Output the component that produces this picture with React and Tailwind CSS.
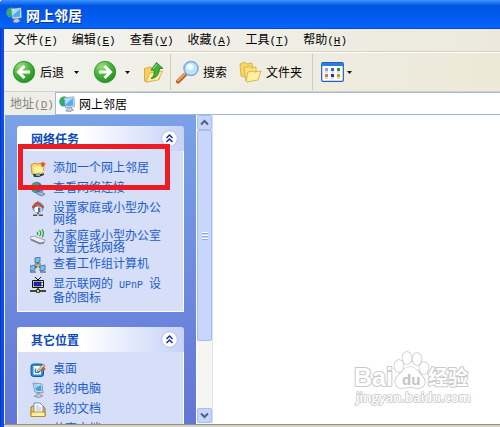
import React from "react";

const Key = ({ children }) => (
  <span className="font-['Liberation_Mono',monospace] text-[11px]">
    (<u className="underline-offset-1">{children}</u>)
  </span>
);

const NetworkIcon = ({ className }) => (
  <svg viewBox="0 0 16 16" className={className} aria-hidden="true">
    <circle cx="5.2" cy="5.6" r="5" fill="#3d8fd6" />
    <path d="M1 3.5C2.5 1 5 .4 7 1L6 4 4.5 5.500 5 8 3 9.500 1 7z" fill="#35b04a" />
    <path d="M5 1.800l10-1 .6 10-9 1.200z" fill="#e3eaf3" stroke="#7287a2" strokeWidth=".6" />
    <path d="M6.200 2.900l7.800-.8.400 7.400-7.100.9z" fill="#4eaeee" />
    <path d="M6.200 2.900l7.800-.8L7 8z" fill="#a9e2ff" />
    <path d="M9 11.500l3.400-.5.500 2 1.800.9-4 2-4-1z" fill="#c3c6d8" stroke="#69728b" strokeWidth=".5" />
  </svg>
);

const RoundArrow = ({ flip }) => (
  <svg viewBox="0 0 24 24" className="h-6 w-6" aria-hidden="true">
    <defs>
      <radialGradient id={flip ? "goB" : "goA"} cx=".35" cy=".25" r=".85">
        <stop offset="0" stopColor="#9be07a" />
        <stop offset=".5" stopColor="#44b23a" />
        <stop offset="1" stopColor="#1f8a1d" />
      </radialGradient>
    </defs>
    <circle cx="12" cy="12" r="10.700" fill={flip ? "url(#goB)" : "url(#goA)"} stroke="#2f8f2b" strokeWidth=".8" />
    <path
      d={flip ? "M6 12h11M11.500 6l6 6-6 6" : "M18 12H7M12.500 6l-6 6 6 6"}
      fill="none"
      stroke="#fff"
      strokeWidth="3"
    />
  </svg>
);

const Caret = () => (
  <svg viewBox="0 0 5 3" className="h-[3px] w-[5px]" aria-hidden="true">
    <path d="M0 0h5L2.500 3z" fill="#111" />
  </svg>
);

const UpFolder = () => (
  <svg viewBox="0 0 22 24" className="h-6 w-[22px]" aria-hidden="true">
    <path d="M2.500 8.500l6-1.500 2 1 7-1v12L5 22l-2.500-1z" fill="#f6cf62" stroke="#d2a02f" strokeWidth=".8" />
    <path d="M4 22l3.500-9 13-2-4 9z" fill="#fdec9f" stroke="#d7a93a" strokeWidth=".8" />
    <path d="M9 18.500c3-2 3.500-5 3-8.500H9l5.500-7.500L21 8.500h-4c.6 5-2 9.500-8 10z" fill="#3cb43a" stroke="#1d7f22" strokeWidth=".8" />
    <path d="M11 9l3.500-4.500" stroke="#a5e68d" />
  </svg>
);

const SearchIcon = () => (
  <svg viewBox="0 0 24 24" className="h-6 w-6" aria-hidden="true">
    <path d="M10 14.500L3 21.500" stroke="#b0602a" strokeWidth="4" strokeLinecap="round" />
    <path d="M9.500 14L3 20.500" stroke="#f3a25c" strokeWidth="2.200" strokeLinecap="round" />
    <circle cx="16" cy="8.500" r="7" fill="#b9e6fd" stroke="#86a9dc" strokeWidth="1.600" />
    <ellipse cx="15" cy="7" rx="3.500" ry="3" fill="#f0fbff" />
  </svg>
);

const FoldersIcon = () => (
  <svg viewBox="0 0 23 22" className="h-[22px] w-[23px]" aria-hidden="true">
    <g fill="#f8d663" stroke="#d5a636" strokeWidth=".8">
      <path d="M1 3l5-2 2 2 5-1 1 10-9 4-3-1z" />
      <path d="M5 7l5-2 2 2 5-1v12l-10 2z" fill="#fbe37c" />
      <path d="M7 20l2-9 5-1 1 1 7-1-3 9-11 2z" fill="#fff09d" />
    </g>
  </svg>
);

const ViewsIcon = () => (
  <svg viewBox="0 0 23 20" className="h-5 w-[23px]" aria-hidden="true">
    <rect x=".7" y=".7" width="21.600" height="18.600" rx="1" fill="#fff" stroke="#2160b5" strokeWidth="1.200" />
    <path d="M1 1h21v3H1z" fill="#2c80dd" />
    {[["#8aa2e5", 4, 6], ["#3a62c8", 10, 6], ["#249a3a", 16, 6], ["#f16a3d", 4, 12], ["#173aa0", 10, 12], ["#d19a16", 16, 12]].map(
      ([color, x, y]) => (
        <g key={`${x}-${y}`}>
          <rect x={x} y={y} width="3" height="3" fill={color} />
          <path d={`M${x} ${y + 4}h3`} stroke="#a8adb8" strokeWidth=".8" />
        </g>
      ),
    )}
  </svg>
);

const taskArt = {
  add: (
    <>
      <path d="M1 4l4-2 2 1 5-1 2 8-4 4-8-1z" fill="#f9d768" stroke="#b98720" strokeWidth=".8" />
      <path d="M3 6l9-1 2 6-9 1z" fill="#fff0a0" />
      <path d="M13 0l.8 2 2.200.5-1.500 1.500.3 2-1.800-1-2 1 .5-2L10 2.500l2-.3z" fill="#f1501c" />
      <path d="M3 13h9l2-1v2l-5 2H4z" fill="#353a40" />
      <path d="M6 12h4v3H6z" fill="#78b898" />
    </>
  ),
  link: (
    <>
      <circle cx="6.500" cy="6.500" r="5.700" fill="#2f75c8" />
      <path d="M2 3l4-2 3 2-1 3-3 1 2 3-2 2-3-3z" fill="#37b153" />
      <path d="M6 11l5 0 4 2-3 2-5-2z" fill="#a8bce0" stroke="#566d98" strokeWidth=".8" />
      <path d="M9 8l4 2" stroke="#5b7fb5" strokeWidth="2" />
    </>
  ),
  home: (
    <>
      <circle cx="8" cy="6.500" r="5.800" fill="#7fa5d4" />
      <path d="M4.500 6h7v5h-7z" fill="#fff" />
      <path d="M2 6l5.500-5.500L14 6l-1.500 1L8 3 3.500 7.500z" fill="#db4a21" stroke="#b8391a" strokeWidth=".6" />
      <path d="M8 6.500h2.500V11H8z" fill="#526fa3" />
      <path d="M7 12h2v1.500h4V15H3v-1.500h4z" fill="#4b505a" />
      <path d="M7 13h2v2H7z" fill="#eac231" />
    </>
  ),
  wireless: (
    <>
      <path d="M7 3c1 .8 1 2 0 3M9.500 1.500c1.700 1.700 1.700 4 0 5.500M12 .5c2 2 2 5.500 0 7.500" fill="none" stroke="#26a02b" strokeWidth="1.200" />
      <path d="M0 8l4-1 11 4-1 3-4 1-9-4z" fill="#e9ecf4" stroke="#8a90a6" strokeWidth=".8" />
      <path d="M1 10.500l9 4 4-1" fill="none" stroke="#777d95" strokeWidth="1.400" />
    </>
  ),
  group: (
    <>
      <path d="M8 5v5M8 9l-4 2M8 9l5 2" stroke="#34445f" strokeWidth="1.500" />
      {[[5, 0], [0, 8], [10, 8]].map(([x, y]) => (
        <g key={x}>
          <path d={`M${x} ${y + 1}l5-1v5l-5 1z`} fill="#6cc3f2" stroke="#41659a" strokeWidth=".8" />
          <path d={`M${x} ${y + 7}h6`} stroke="#6d7890" strokeWidth="1.400" />
        </g>
      ))}
      <circle cx="8" cy="8.500" r="1.500" fill="#e5b929" />
    </>
  ),
  upnp: (
    <>
      <path d="M5 0l3 3 3-3" fill="none" stroke="#111" />
      <path d="M2.500 3.500h11v7h-11z" fill="#e8e4d8" stroke="#111" />
      <path d="M4 5h7v4H4z" fill="#1525db" stroke="#111" strokeWidth=".6" />
      <path d="M12 5v1M12 8v1" stroke="#111" />
      <path d="M8 11v3M0 14h16" stroke="#111" strokeWidth="1.300" />
      <path d="M6.500 12.500h3v3h-3z" fill="#ead125" stroke="#111" strokeWidth=".7" />
    </>
  ),
  desktop: (
    <>
      <rect x="1" y="2" width="12.500" height="12.500" rx="2.500" fill="#2e8fd6" stroke="#125a9e" />
      <path d="M3.500 4H11v8.500H3.500z" fill="#f3fbff" />
      <path d="M6 6.500c-1.500 2-1 4 1 4s3-1 3.500-3" fill="none" stroke="#2871b7" strokeWidth="1.200" />
      <path d="M7 9l6-7 2 1.500-6 6z" fill="#f3d494" stroke="#845b35" strokeWidth=".7" />
      <circle cx="14" cy="7" r="1.400" fill="#e15320" />
    </>
  ),
  computer: (
    <>
      <path d="M3 1l9 1 1 9-8-1z" fill="#dce4ef" stroke="#7383a5" strokeWidth=".8" />
      <path d="M4.500 2.500l6.500.8.6 6-5.600-.8z" fill="#38a3e9" />
      <path d="M4.500 2.500l6.500.8-5.500 3z" fill="#91d7fb" />
      <path d="M7 11l3 .5v1.500l3 .8-4 2-5-1.500 3-1z" fill="#c3c8d8" stroke="#6f7894" strokeWidth=".6" />
    </>
  ),
  docs: (
    <>
      <path d="M1 5l2-1h9l3 2v8H1z" fill="#f3c84d" stroke="#a67817" />
      <path d="M4 1h6l3 3v8H4z" fill="#fff" stroke="#6185bd" strokeWidth=".9" />
      <path d="M6 4h3M6 6h5M6 8h5" stroke="#8caad3" strokeWidth=".8" />
      <path d="M1 10h14v4.500H1z" fill="#fff0a1" stroke="#a67817" strokeWidth=".8" />
    </>
  ),
  shared: <path d="M1 4l4-2 2 2h7v10H1z" fill="#f8d663" stroke="#b98720" />,
};

const Panel = ({ title, items }) => (
  <section>
    <header className="flex h-[25px] items-center justify-between rounded-t-[3px] bg-linear-to-r from-white from-40% to-[#c6d3f7] pr-1.5 pl-3.5">
      <h2 className="text-xs font-bold text-[#0d4ab8]">{title}</h2>
      <button aria-label={`收起${title}`} className="h-[17px] w-[17px]">
        <svg viewBox="0 0 17 17">
          <circle cx="8.500" cy="8.500" r="7.800" fill="#fff" stroke="#b5bfdb" />
          <path d="M5.500 8l3-3 3 3M5.500 12l3-3 3 3" fill="none" stroke="#16388c" strokeWidth="1.500" />
        </svg>
      </button>
    </header>
    <ul className="flex flex-col gap-1 border border-t-0 border-white bg-[#d6dff7] px-3 pt-2.5 pb-2 text-xs leading-3 text-[#215dc6]">
      {items.map(([icon, text]) => (
        <li key={icon}>
          <a href="#" className="flex min-h-4 gap-[7px]">
            <svg viewBox="0 0 16 16" className="h-4 w-4 shrink-0" aria-hidden="true">
              {taskArt[icon]}
            </svg>
            <span>{text}</span>
          </a>
        </li>
      ))}
    </ul>
  </section>
);

const ScrollButton = ({ label, d }) => (
  <button aria-label={label} className="h-[15px] w-[15px] shrink-0 rounded-xs border border-[#a9bdf0] bg-[#c6d5fb]">
    <svg viewBox="0 0 13 13">
      <path d={d} fill="none" stroke="#4d6185" strokeWidth="2" />
    </svg>
  </button>
);

const Watermark = () => (
  <svg viewBox="0 0 120 60" className="absolute right-7 bottom-4 h-[60px] w-[120px]" role="img" aria-label="Baidu 经验">
    <g
      fill="#fff"
      stroke="#c9c9c9"
      strokeWidth="1.600"
      strokeLinejoin="round"
      paintOrder="stroke"
      fontFamily="'Liberation Sans', 'Noto Sans CJK SC', sans-serif"
      fontWeight="bold"
    >
      <text x="2" y="38" fontSize="25" strokeWidth="2">Bai</text>
      <text x="76" y="37" fontSize="20" strokeWidth="2">经验</text>
      <text x="4" y="54" fontSize="13" fontFamily="'Open Sans', sans-serif" fontWeight="600">jingyan.baidu.com</text>
      <path d="M58 19c6 0 8 5 12 9 5 5 3 12-4 12-4 0-5-1-8-1s-5 1-8 1c-7 0-9-7-4-12 4-4 6-9 12-9z" />
      <ellipse cx="47" cy="18" rx="4.500" ry="6" />
      <ellipse cx="55" cy="10" rx="4.500" ry="6" />
      <ellipse cx="65" cy="11" rx="4.500" ry="6" />
      <ellipse cx="72" cy="20" rx="4.500" ry="6" />
    </g>
    <text x="50" y="37" fontSize="15" fontWeight="bold" fontFamily="'Liberation Sans', sans-serif" fill="#c4c4c4">du</text>
  </svg>
);

const menus = [["文件", "F"], ["编辑", "E"], ["查看", "V"], ["收藏", "A"], ["工具", "T"], ["帮助", "H"]];

const networkTasks = [
  ["add", "添加一个网上邻居"],
  ["link", "查看网络连接"],
  ["home", "设置家庭或小型办公网络"],
  ["wireless", "为家庭或小型办公室设置无线网络"],
  ["group", "查看工作组计算机"],
  ["upnp", <>显示联网的<span className="font-['Liberation_Mono',monospace] text-[10px] leading-none"> UPnP </span>设备的图标</>],
];

const otherPlaces = [
  ["desktop", "桌面"],
  ["computer", "我的电脑"],
  ["docs", "我的文档"],
  ["shared", "共享文档"],
];

export default function App() {
  return (
    <div className="flex h-screen w-full flex-col overflow-hidden rounded-tl-sm bg-[#0a50dd] font-['Noto_Sans_CJK_SC',sans-serif] text-xs text-black shadow-[inset_1px_0_#0831d9]">
      <header className="flex h-[29px] shrink-0 items-center gap-1 bg-linear-to-b from-[#3b95ff] via-[#0054e3] via-20% to-[#0564fa] pt-px pl-1.5 shadow-[inset_0_-1px_#0648cf]">
        <NetworkIcon className="h-4 w-4" />
        <h1 className="text-sm font-bold text-white [text-shadow:1px_1px_#0a2f8c]">网上邻居</h1>
      </header>

      <div className="ml-1 flex min-h-0 flex-1 flex-col bg-[#efeee6]">
        <nav className="flex h-[23px] shrink-0 items-center gap-3.5 border-b border-[#d6d2c2] bg-linear-to-r from-[#f3f3f1] to-[#ece9dc] pl-2.5">
          {menus.map(([name, key]) => (
            <button key={key} className="whitespace-nowrap">
              {name}
              <Key>{key}</Key>
            </button>
          ))}
        </nav>

        <div className="flex h-10 shrink-0 items-center border-t border-b border-t-white border-b-[#d6d2c2] bg-linear-to-r from-[#f2f2ee] to-[#ece9d8] pl-2">
          <button className="flex items-center gap-1"><RoundArrow />后退</button>
          <button aria-label="后退列表" className="ml-2.5"><Caret /></button>
          <button aria-label="前进" className="ml-3.5"><RoundArrow flip /></button>
          <button aria-label="前进列表" className="ml-2"><Caret /></button>
          <button aria-label="向上" className="ml-3"><UpFolder /></button>
          <span className="ml-1.5 h-9 w-px bg-[#cfccbd]" />
          <button className="ml-1 flex items-center gap-1"><SearchIcon />搜索</button>
          <button className="ml-3 flex items-center gap-1"><FoldersIcon />文件夹</button>
          <span className="ml-2.5 h-9 w-px bg-[#cfccbd]" />
          <button aria-label="查看" className="ml-2 flex items-center gap-[3px]"><ViewsIcon /><Caret /></button>
        </div>

        <div className="flex h-[23px] shrink-0 items-center">
          <label htmlFor="address" className="w-[51px] shrink-0 pl-1.5 whitespace-nowrap text-[#85847c]">
            地址<Key>D</Key>
          </label>
          <div className="flex h-full min-w-0 flex-1 items-center gap-1 border border-r-0 border-[#a3b9d3] bg-white pl-[3px]">
            <NetworkIcon className="h-4 w-4 shrink-0" />
            <input id="address" defaultValue="网上邻居" className="min-w-0 flex-1 bg-transparent outline-none" />
          </div>
        </div>

        <main className="relative ml-px flex min-h-0 flex-1 bg-white">
          <aside className="flex w-[191px] shrink-0 flex-col gap-[15px] overflow-hidden bg-linear-to-b from-[#7ba2e7] to-[#6375d6] px-3 pt-[11px]">
            <Panel title="网络任务" items={networkTasks} />
            <Panel title="其它位置" items={otherPlaces} />
          </aside>
          <div className="flex w-[17px] shrink-0 flex-col items-center border-r border-l border-r-[#dce3ee] border-l-white bg-[#f5f5f2] pb-px">
            <ScrollButton label="向上滚动" d="M3 8.500L6.500 5 10 8.500" />
            <div className="flex w-[15px] flex-[31] flex-col items-center justify-center gap-0.5 rounded-xs border border-[#a6bcf0] bg-[#c8d6fb]">
              <i className="h-px w-1.5 bg-white shadow-[0_1px_#8eaae6]" />
              <i className="h-px w-1.5 bg-white shadow-[0_1px_#8eaae6]" />
              <i className="h-px w-1.5 bg-white shadow-[0_1px_#8eaae6]" />
            </div>
            <div className="flex-[10]" />
            <ScrollButton label="向下滚动" d="M3 4.500L6.500 8 10 4.500" />
          </div>
          <Watermark />
          <div className="absolute top-[29px] left-[13px] h-[46px] w-[152px] border-5 border-[#ed1c24]" />
        </main>
        <footer className="h-[3px] shrink-0 border-t border-[#918f80] bg-[#d8d4c2]" />
      </div>
    </div>
  );
}
